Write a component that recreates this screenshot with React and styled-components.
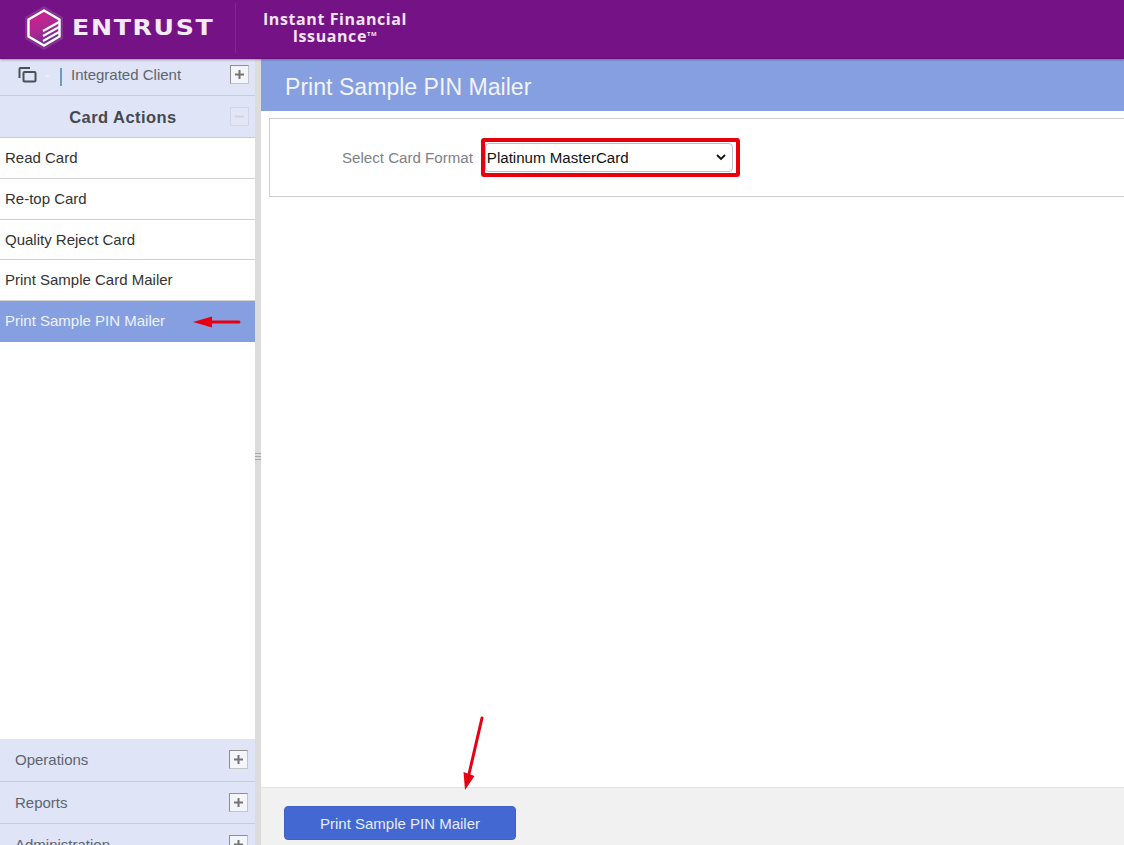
import React from 'react';
import styled, { createGlobalStyle } from 'styled-components';

const Global = createGlobalStyle`
html, body {
  margin: 0;
  padding: 0;
  height: 100%;
  overflow: hidden;
  background: #fff;
  font-family: "Liberation Sans", Arial, sans-serif;
}
* { box-sizing: border-box; }
`

const Page = styled.div`
position: relative;
width: 1124px;
height: 845px;
display: flex;
flex-direction: column;
overflow: hidden;
`

const Header = styled.header`
height: 59px;
flex: none;
background: #751285;
border-bottom: 1px solid #6a1079;
box-shadow: 0 1px 2px rgba(60, 60, 60, 0.45);
display: flex;
align-items: center;
padding-bottom: 3px;
position: relative;
z-index: 2;
`

const Brand = styled.div`
width: 236px;
height: 50px;
padding-left: 24px;
display: flex;
align-items: center;
gap: 8px;
border-right: 1px solid #7c2a8c;
`

const BrandName = styled.span`
font-family: "DejaVu Sans", sans-serif;
font-weight: 700;
font-size: 21px;
letter-spacing: 1.4px;
color: #f4eaf6;
transform: scaleX(1.2);
transform-origin: left center;
`

const Product = styled.div`
width: 198px;
text-align: center;
font-family: "Open Sans", sans-serif;
font-weight: 700;
font-size: 16px;
letter-spacing: 0.6px;
line-height: 17px;
color: #f1e4f3;
`

const Tm = styled.sup`
font-size: 6px;
line-height: 0;
vertical-align: 6px;
`

const Body = styled.div`
flex: 1;
display: flex;
min-height: 0;
`

const Sidebar = styled.aside`
width: 255px;
flex: none;
display: flex;
flex-direction: column;
overflow: hidden;
`

const ClientRow = styled.div`
height: 37px;
flex: none;
background: #dfe4f6;
border-bottom: 1px solid #c2cbe8;
display: flex;
align-items: center;
padding: 0 6px 5px 17px;
color: #5e6470;
font-size: 15px;
`

const CopyIcon = styled.svg`
width: 20px;
height: 20px;
flex: none;
`

const Caret = styled.span`
width: 0;
height: 0;
margin: 3px 10px 0 7px;
border-left: 3px solid transparent;
border-right: 3px solid transparent;
border-top: 3px solid #eef0f8;
`

const Divider = styled.span`
width: 2px;
height: 18px;
margin: 4px 9px 0 0;
background: #6f9cc4;
`

const ClientName = styled.span`
flex: 1;
`

const Toggle = styled.span`
width: 19px;
height: 19px;
flex: none;
border: 1px solid ${p => (p.$muted ? '#d0d6ea' : '#8f8f8f')};
border-right-color: ${p => (p.$muted ? '#d0d6ea' : '#c4c4c4')};
border-bottom-color: ${p => (p.$muted ? '#d0d6ea' : '#c4c4c4')};
background: ${p => (p.$muted ? '#e2e6f6' : '#f4f5fa')};
color: ${p => (p.$muted ? '#cfd4e6' : '#747474')};
display: flex;
align-items: center;
justify-content: center;
`

const SectionTitle = styled.div`
height: 42px;
flex: none;
background: #dfe4f6;
border-bottom: 1px solid #c2cbe8;
display: flex;
align-items: center;
padding: 0 6px 0 0;
color: #46484f;
font-weight: 700;
font-size: 16.5px;
letter-spacing: 0.45px;
`

const SectionLabel = styled.span`
flex: 1;
text-align: center;
padding: 1px 0 0 16px;
`

const MenuList = styled.div`
flex: 1;
min-height: 0;
display: flex;
flex-direction: column;
`

const MenuItem = styled.div`
height: ${p => p.$height || 40.6}px;
flex: none;
display: flex;
align-items: center;
padding: 0 0 1px 5px;
font-size: 15px;
color: ${p => (p.$active ? '#eef2fc' : '#333')};
background: ${p => (p.$active ? '#869fe0' : '#fff')};
border-bottom: 1px solid ${p => (p.$active ? '#869fe0' : '#d2d2d2')};
`

const BottomNav = styled.div`
height: 106px;
flex: none;
overflow: hidden;
`

const Accordion = styled.div`
height: 42.5px;
background: #dfe4f6;
border-bottom: 1px solid #c2cbe8;
display: flex;
align-items: center;
justify-content: space-between;
padding: 0 7px 0 15px;
color: #5e6470;
font-size: 15px;
`

const Splitter = styled.div`
width: 6px;
flex: none;
background: #dcdcdc;
display: flex;
align-items: center;
justify-content: center;
`

const Grip = styled.span`
width: 6px;
height: 7px;
margin-top: 8px;
background: repeating-linear-gradient(#a9a9a9 0, #a9a9a9 1px, #dcdcdc 1px, #dcdcdc 3px);
`

const Main = styled.main`
flex: 1;
display: flex;
flex-direction: column;
min-width: 0;
`

const TitleBar = styled.div`
height: 52px;
flex: none;
background: #869fe0;
color: #f1f4fc;
font-size: 23.1px;
display: flex;
align-items: center;
padding: 4px 0 0 24px;
`

const Content = styled.div`
flex: 1;
padding: 7px 0 0 8px;
`

const FormPanel = styled.div`
height: 79px;
margin-right: -2px;
border: 1px solid #cfcfcf;
display: flex;
align-items: center;
padding: 0 0 0 72px;
`

const FieldLabel = styled.label`
color: #7d8288;
font-size: 15.1px;
margin-right: 8px;
`

const SelectBox = styled.div`
width: 259px;
height: 39px;
border: 4px solid #e8000d;
border-radius: 3px;
background: #fff;
padding: 1px 3px 1px 0;
`

const Select = styled.div`
height: 100%;
border: 1px solid #b9bfd0;
border-radius: 4px;
display: flex;
align-items: center;
justify-content: space-between;
padding: 0 6px 0 1px;
color: #111;
font-size: 15.1px;
`

const Footer = styled.footer`
height: 58px;
flex: none;
background: #f1f1f1;
border-top: 1px solid #e2e2e2;
padding: 18px 0 0 23px;
`

const PrimaryButton = styled.button`
width: 232px;
height: 34px;
border: 1px solid #3f62c8;
border-radius: 4px;
background: #4468d2;
color: #e6ecfa;
font-family: inherit;
font-size: 15px;
padding: 0;
`

const Annotation = styled.svg`
position: absolute;
left: ${p => p.$x}px;
top: ${p => p.$y}px;
overflow: visible;
`

const HEX = 'M20 4.5 L35.5 13.5 L35.5 30.5 L20 39.5 L4.5 30.5 L4.5 13.5 Z';

const Logo = () => (
    <svg width="40" height="44" viewBox="0 0 40 44">
        <defs>
            <linearGradient id="hexFill" x1="0.3" y1="0" x2="0.7" y2="1">
                <stop offset="0" stopColor="#d31f8f" />
                <stop offset="0.55" stopColor="#a72a92" />
                <stop offset="1" stopColor="#5c2d91" />
            </linearGradient>
            <clipPath id="hexClip">
                <path d={HEX} />
            </clipPath>
        </defs>
        <path d="M20 0 L39 11 L39 33 L20 44 L1 33 L1 11 Z" fill="#8f4a9c" opacity="0.55" />
        <path d={HEX} fill="url(#hexFill)" />
        <g clipPath="url(#hexClip)">
            <path d="M19 25 L36 15.5 M19 30 L36 20.5 M19 35 L36 25.5" stroke="#fff" strokeWidth="2.2" />
        </g>
        <path d={HEX} fill="none" stroke="#fff" strokeWidth="2.4" strokeLinejoin="round" />
    </svg>
);

const Plus = () => (
    <svg width="11" height="11" viewBox="0 0 11 11">
        <path d="M5.5 1 V10 M1 5.5 H10" stroke="currentColor" strokeWidth="2" />
    </svg>
);

const Minus = () => (
    <svg width="11" height="11" viewBox="0 0 11 11">
        <path d="M1 5.5 H10" stroke="currentColor" strokeWidth="2" />
    </svg>
);

const MENU = [
    { label: 'Read Card', height: 41 },
    { label: 'Re-top Card', height: 41 },
    { label: 'Quality Reject Card', height: 40 },
    { label: 'Print Sample Card Mailer', height: 41 },
];

const App = () => {
    return (
        <Page>
            <Global />
            <Header>
                <Brand>
                    <Logo />
                    <BrandName>ENTRUST</BrandName>
                </Brand>
                <Product>
                    Instant Financial<br />Issuance<Tm>TM</Tm>
                </Product>
            </Header>
            <Body>
                <Sidebar>
                    <ClientRow>
                        <CopyIcon viewBox="0 0 20 20" fill="none" stroke="#4c4f55" strokeWidth="2">
                            <path d="M2.5 13 V4 a1 1 0 0 1 1 -1 H13" />
                            <rect x="6.5" y="7" width="12" height="9.5" rx="1" />
                        </CopyIcon>
                        <Caret />
                        <Divider />
                        <ClientName>Integrated Client</ClientName>
                        <Toggle><Plus /></Toggle>
                    </ClientRow>
                    <SectionTitle>
                        <SectionLabel>Card Actions</SectionLabel>
                        <Toggle $muted><Minus /></Toggle>
                    </SectionTitle>
                    <MenuList>
                        {MENU.map(item => (
                            <MenuItem key={item.label} $height={item.height}>{item.label}</MenuItem>
                        ))}
                        <MenuItem $active $height={41}>Print Sample PIN Mailer</MenuItem>
                    </MenuList>
                    <BottomNav>
                        <Accordion>Operations<Toggle><Plus /></Toggle></Accordion>
                        <Accordion>Reports<Toggle><Plus /></Toggle></Accordion>
                        <Accordion>Administration<Toggle><Plus /></Toggle></Accordion>
                    </BottomNav>
                </Sidebar>
                <Splitter><Grip /></Splitter>
                <Main>
                    <TitleBar>Print Sample PIN Mailer</TitleBar>
                    <Content>
                        <FormPanel>
                            <FieldLabel>Select Card Format</FieldLabel>
                            <SelectBox>
                                <Select>
                                    Platinum MasterCard
                                    <svg width="10" height="7" viewBox="0 0 10 7">
                                        <path d="M1 1 L5 5 L9 1" fill="none" stroke="#111" strokeWidth="1.8" />
                                    </svg>
                                </Select>
                            </SelectBox>
                        </FormPanel>
                    </Content>
                    <Footer>
                        <PrimaryButton>Print Sample PIN Mailer</PrimaryButton>
                    </Footer>
                </Main>
            </Body>
            <Annotation $x={193} $y={315} width="48" height="14" viewBox="0 0 48 14">
                <path d="M14 7 L46 7" stroke="#e60012" strokeWidth="3" strokeLinecap="round" />
                <path d="M0 7 L19 1.5 L19 12.5 Z" fill="#e60012" />
            </Annotation>
            <Annotation $x={462} $y={716} width="22" height="74" viewBox="0 0 22 74">
                <path d="M20 2 L7 58" stroke="#e60012" strokeWidth="3" strokeLinecap="round" />
                <path d="M3 74 L1.5 56 L12.5 60 Z" fill="#e60012" />
            </Annotation>
        </Page>
    )
}

export default App;
